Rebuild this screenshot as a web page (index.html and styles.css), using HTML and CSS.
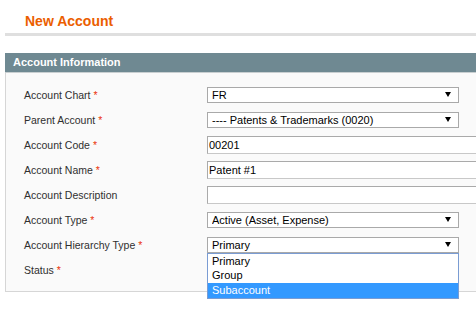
FILE: index.html
```html
<!DOCTYPE html>
<html lang="en">
<head>
  <meta charset="UTF-8">
  <title>New Account</title>
  <link rel="stylesheet" href="styles.css">
</head>
<body>
  <div class="page">
    <div class="content-header">
      <h3>New Account</h3>
    </div>

    <div class="entry-edit">
      <div class="entry-edit-head">Account Information</div>
      <div class="fieldset">
        <div class="form-list">
          <label>Account Chart <span class="required">*</span></label>
          <div class="select-box">
            <select><option>FR</option></select>
          </div>

          <label>Parent Account <span class="required">*</span></label>
          <div class="select-box">
            <select><option>---- Patents &amp; Trademarks (0020)</option></select>
          </div>

          <label>Account Code <span class="required">*</span></label>
          <div><input type="text" class="input-text" value="00201"></div>

          <label>Account Name <span class="required">*</span></label>
          <div><input type="text" class="input-text" value="Patent #1"></div>

          <label>Account Description</label>
          <div><input type="text" class="input-text" value=""></div>

          <label>Account Type <span class="required">*</span></label>
          <div class="select-box">
            <select><option>Active (Asset, Expense)</option></select>
          </div>

          <label>Account Hierarchy Type <span class="required">*</span></label>
          <div class="select-box open">
            <select><option>Primary</option></select>
            <ul class="dropdown">
              <li>Primary</li>
              <li>Group</li>
              <li class="selected">Subaccount</li>
            </ul>
          </div>

          <label>Status <span class="required">*</span></label>
          <div class="select-box">
            <select><option>Enabled</option></select>
          </div>
        </div>
      </div>
    </div>
  </div>
</body>
</html>
```

FILE: styles.css
```css
body {
  margin: 0;
  padding: 0;
  font-family: "Liberation Sans", Arial, sans-serif;
  color: #2f2f2f;
  background: #fff;
  overflow: hidden;
}

.page {
  width: 640px;
  margin-left: 5px;
  padding-bottom: 20px;
}

/* page title */
.content-header {
  border-bottom: 3px solid #dfdfdf;
  padding: 12px 0 3px 20px;
}

.content-header h3 {
  margin: 0;
  font-size: 14px;
  line-height: 18px;
  font-weight: bold;
  color: #eb5e00;
}

/* box */
.entry-edit {
  margin-top: 17px;
}

.entry-edit-head {
  background: #6f8992;
  color: #fff;
  font-size: 11px;
  font-weight: bold;
  line-height: 19px;
  height: 19px;
  padding-left: 8px;
  border-bottom: 1px solid #c9cfd1;
}

.fieldset {
  background: #fafafa;
  border: 1px solid #d6d6d6;
  border-top: none;
  padding: 9px 0 9px 18px;
}

.form-list {
  display: grid;
  grid-template-columns: 183px 1fr;
  grid-auto-rows: 25px;
  align-items: center;
}

.form-list label {
  font-size: 10.5px;
  color: #2f2f2f;
}

.required {
  color: #eb340a;
}

/* fields */
.input-text {
  box-sizing: border-box;
  display: block;
  width: 300px;
  height: 18px;
  margin: 0;
  padding: 0 1px;
  border: 1px solid #aaa;
  border-color: #aaa #c8c8c8 #c8c8c8 #aaa;
  background: #fff;
  font-family: "Liberation Sans", Arial, sans-serif;
  font-size: 11px;
  color: #000;
}

.select-box {
  position: relative;
  width: 252px;
  height: 16px;
}

.select-box select {
  appearance: none;
  -webkit-appearance: none;
  box-sizing: border-box;
  display: block;
  width: 252px;
  height: 16px;
  margin: 0;
  padding: 0 0 0 4px;
  border: 1px solid #a9a9a9;
  border-radius: 0;
  background: #fff;
  font-family: "Liberation Sans", Arial, sans-serif;
  font-size: 11px;
  line-height: 14px;
  color: #000;
}

.select-box::after {
  content: "";
  position: absolute;
  right: 8px;
  top: 5px;
  border-left: 3px solid transparent;
  border-right: 3px solid transparent;
  border-top: 5px solid #000;
  pointer-events: none;
}

/* open list of the hierarchy select */
.dropdown {
  position: absolute;
  top: 100%;
  left: 0;
  z-index: 10;
  box-sizing: border-box;
  width: 252px;
  margin: 0;
  padding: 0;
  list-style: none;
  background: #fff;
  border: 1px solid #7a9cd3;
  font-size: 11px;
  line-height: 14px;
  color: #000;
}

.dropdown li {
  height: 14px;
  padding-left: 4px;
}

.dropdown li + li {
  height: 15px;
  line-height: 15px;
}

.dropdown li.selected {
  background: #3399ff;
  color: #fff;
}
```
